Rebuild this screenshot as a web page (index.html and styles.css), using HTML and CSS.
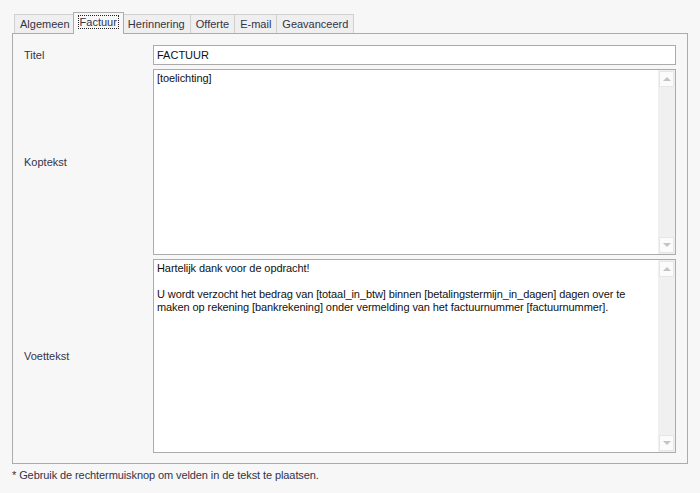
FILE: index.html
```html
<!DOCTYPE html>
<html lang="nl">
<head>
<meta charset="utf-8">
<title>Factuur</title>
<link rel="stylesheet" href="styles.css">
</head>
<body>
<div class="window">
  <div class="tabs">
    <div class="tab">Algemeen</div>
    <div class="tab active"><span class="focus">Factuur</span></div>
    <div class="tab">Herinnering</div>
    <div class="tab">Offerte</div>
    <div class="tab">E-mail</div>
    <div class="tab">Geavanceerd</div>
  </div>
  <div class="panel">
    <div class="row row-title">
      <div class="label">Titel</div>
      <div class="input">FACTUUR</div>
    </div>
    <div class="row row-head">
      <div class="label">Koptekst</div>
      <div class="memo">
        <div class="memo-text">[toelichting]</div>
        <div class="scrollbar">
          <div class="sb-btn"><span class="arrow-up"></span></div>
          <div class="sb-btn"><span class="arrow-down"></span></div>
        </div>
      </div>
    </div>
    <div class="row row-foot">
      <div class="label">Voettekst</div>
      <div class="memo">
        <div class="memo-text">Hartelijk dank voor de opdracht!<br><br>U wordt verzocht het bedrag van [totaal_in_btw] binnen [betalingstermijn_in_dagen] dagen over te<br>maken op rekening [bankrekening] onder vermelding van het factuurnummer [factuurnummer].</div>
        <div class="scrollbar">
          <div class="sb-btn"><span class="arrow-up"></span></div>
          <div class="sb-btn"><span class="arrow-down"></span></div>
        </div>
      </div>
    </div>
  </div>
  <div class="note">* Gebruik de rechtermuisknop om velden in de tekst te plaatsen.</div>
</div>
</body>
</html>
```

FILE: styles.css
```css
html, body {
  margin: 0;
  padding: 0;
  background: #f7f7f7;
}
body {
  font-family: "Liberation Sans", Arial, sans-serif;
  font-size: 11px;
  color: #1a1a1a;
  width: 700px;
  height: 493px;
  overflow: hidden;
}
.window {
  padding: 12px 12px 0 12px;
}
.tabs {
  display: flex;
  align-items: flex-end;
  padding-left: 2px;
  height: 21px;
  position: relative;
  z-index: 2;
}
.tab {
  box-sizing: border-box;
  height: 19px;
  padding: 0 5px;
  margin-right: -1px;
  border: 1px solid #d0d0d0;
  border-bottom: none;
  background: #efefef;
  color: #333348;
  line-height: 18px;
}
.tab.active {
  height: 22px;
  margin: 0 -2px -1px -2px;
  padding: 0 5px;
  border-color: #acacac;
  background: #f7f7f7;
  position: relative;
  z-index: 3;
  line-height: 19px;
}
.focus {
  outline: 1px dotted #222;
  padding: 0 1px;
}
.panel {
  box-sizing: border-box;
  width: 676px;
  border: 1px solid #acacac;
  padding: 11px 11px 10px 11px;
  display: flex;
  flex-direction: column;
  gap: 4px;
}
.row {
  display: flex;
  align-items: center;
}
.label {
  width: 129px;
  flex: none;
  color: #333348;
}
.input {
  box-sizing: border-box;
  flex: 1;
  height: 20px;
  border: 1px solid #ababab;
  background: #fff;
  padding: 0 3px;
  line-height: 18px;
  color: #111;
}
.memo {
  box-sizing: border-box;
  flex: 1;
  display: flex;
  border: 1px solid #ababab;
  background: #fff;
}
.row-head .memo { height: 186px; }
.row-foot .memo { height: 194px; }
.memo-text {
  flex: 1;
  padding: 2px 3px;
  line-height: 13px;
  color: #111;
  letter-spacing: -0.09px;
}
.scrollbar {
  width: 17px;
  flex: none;
  background: #f0f0f0;
  display: flex;
  flex-direction: column;
  justify-content: space-between;
  padding: 1px 0;
  box-sizing: border-box;
}
.sb-btn {
  box-sizing: border-box;
  width: 15px;
  height: 16px;
  margin-left: 1px;
  background: #fbfbfb;
  border: 1px solid #e6e6e6;
  display: flex;
  align-items: center;
  justify-content: center;
}
.arrow-up, .arrow-down {
  width: 0;
  height: 0;
  border-left: 4px solid transparent;
  border-right: 4px solid transparent;
}
.arrow-up { border-bottom: 4px solid #c4c4c4; }
.arrow-down { border-top: 4px solid #c4c4c4; }
.note {
  margin-top: 5px;
  color: #333348;
  line-height: 13px;
  letter-spacing: -0.09px;
}
```
